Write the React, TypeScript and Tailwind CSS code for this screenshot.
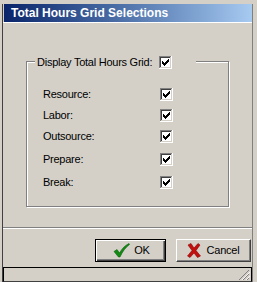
import React from "react";

const font = "font-['Liberation_Sans',Arial,sans-serif]";

function CheckBox() {
  return (
    <svg width="13" height="13" viewBox="0 0 13 13" shapeRendering="crispEdges" className="block">
      <rect x="0" y="0" width="13" height="13" fill="#fff" />
      <rect x="0" y="0" width="12" height="1" fill="#808080" />
      <rect x="0" y="0" width="1" height="12" fill="#808080" />
      <rect x="1" y="1" width="10" height="1" fill="#404040" />
      <rect x="1" y="1" width="1" height="10" fill="#404040" />
      <rect x="1" y="11" width="11" height="1" fill="#d4d0c8" />
      <rect x="11" y="1" width="1" height="11" fill="#d4d0c8" />
      {[
        [3, 5],
        [4, 6],
        [5, 7],
        [6, 6],
        [7, 5],
        [8, 4],
        [9, 3],
      ].map(([x, y]) => (
        <rect key={x} x={x} y={y} width="1" height="3" fill="#000" />
      ))}
    </svg>
  );
}

function GreenCheck() {
  return (
    <svg width="17" height="15" viewBox="0 0 17 15" className="block">
      <path d="M1 8.5 L4 6.5 L6.5 10 C9 5.5 12 2.5 16 0.5 L16.5 1.5 C12.5 4.5 9.5 8.5 7 14 L5.5 14 Z" fill="#138a13" stroke="#0b5f0b" strokeWidth="0.6" />
    </svg>
  );
}

function RedX() {
  return (
    <svg width="14" height="15" viewBox="0 0 14 15" className="block">
      <path d="M1 2 L4 0.5 L7 5 L11 0.5 L13 2 L9 7.5 L13.5 13 L10.5 14.5 L7 10 L3 14.5 L0.5 13 L5 7.5 Z" fill="#c40f0f" stroke="#8a0606" strokeWidth="0.6" />
    </svg>
  );
}

// row heights are uneven on the original form
const rows = [
  { label: "Resource:", h: "h-[21px]" },
  { label: "Labor:", h: "h-[20px]" },
  { label: "Outsource:", h: "h-[23px]" },
  { label: "Prepare:", h: "h-[23px]" },
  { label: "Break:", h: "h-[22px]" },
];

export default function App() {
  return (
    <div className={`w-[257px] h-[282px] bg-[#d4d0c8] pt-[4px] pl-[2px] flex flex-col overflow-hidden ${font}`}>
      <div className="w-[251px] flex-1 flex flex-col border-l border-r border-l-[#404040] border-r-[#808080]">
        {/* Title bar */}
        <div className="ml-[1px] h-[18px] flex items-center pl-[7px] bg-gradient-to-r from-[#0a246a] to-[#a6caf0]">
          <span className="text-white text-[12px] font-bold leading-none">Total Hours Grid Selections</span>
        </div>
        <div className="h-[1px] bg-white" />

        {/* Group box */}
        <div className="relative mt-[38px] ml-[23px] w-[203px] h-[146px] border border-[#808080] shadow-[1px_1px_0_#fff]">
          <div className="h-full border-l border-t border-white">
            <div className="absolute top-[-6px] left-[8px] flex items-center gap-[7px] bg-[#d4d0c8] pl-[2px] pr-[24px] text-[11px] tracking-[-0.25px] text-black">
              <span className="leading-[13px]">Display Total Hours Grid:</span>
              <CheckBox />
            </div>
            <div className="pt-[21px] flex flex-col">
              {rows.map((r) => (
                <div key={r.label} className={`${r.h} flex items-center pl-[15px] text-[11px] tracking-[-0.25px] text-black`}>
                  <span className="w-[117px]">{r.label}</span>
                  <CheckBox />
                </div>
              ))}
            </div>
          </div>
        </div>

        {/* Separator */}
        <div className="mt-[20px] h-[1px] bg-[#808080]" />
        <div className="h-[1px] bg-white" />

        {/* Buttons */}
        <div className="mt-[10px] flex justify-end gap-[10px] pr-[1px] text-[11px] tracking-[-0.2px] text-black">
          <button className="w-[71px] h-[23px] border border-black flex items-center justify-center gap-[4px] pl-[2px] shadow-[inset_1px_1px_0_#fff,inset_-1px_-1px_0_#404040,inset_-2px_-2px_0_#808080]">
            <GreenCheck />
            <span>OK</span>
          </button>
          <button className="w-[75px] h-[23px] border-t border-l border-white border-r border-b border-r-[#404040] border-b-[#404040] flex items-center justify-center gap-[5px] shadow-[inset_-1px_-1px_0_#808080]">
            <RedX />
            <span>Cancel</span>
          </button>
        </div>

        {/* Status bar */}
        <div className="mt-[5px] h-[15px] border border-black border-b-[#404040] relative">
          <svg width="12" height="12" viewBox="0 0 12 12" className="absolute right-[1px] bottom-0" shapeRendering="crispEdges">
            <path d="M11 1 L1 11 M11 5 L5 11 M11 9 L9 11" stroke="#808080" strokeWidth="1.2" />
            <path d="M11 2.5 L2.5 11 M11 6.5 L6.5 11 M11 10.5 L10.5 11" stroke="#fff" strokeWidth="0.8" />
          </svg>
        </div>
      </div>
    </div>
  );
}
